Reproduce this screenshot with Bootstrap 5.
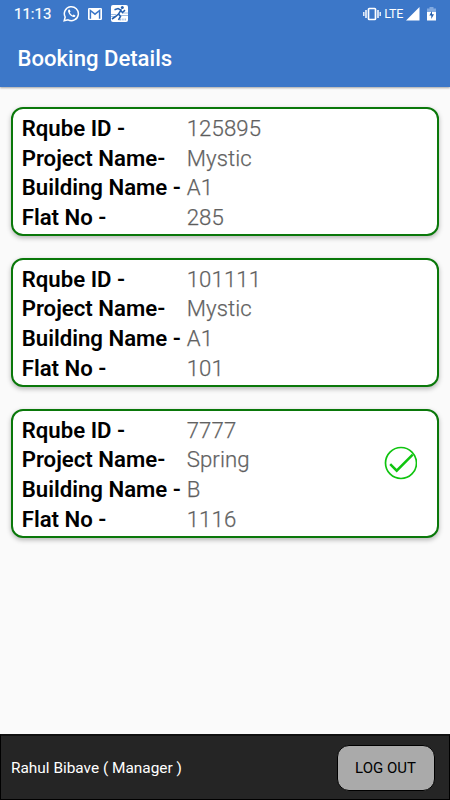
<!DOCTYPE html>
<html lang="en">
<head>
<meta charset="utf-8">
<meta name="viewport" content="width=device-width, initial-scale=1">
<title>Booking Details</title>
<link rel="stylesheet" href="https://cdn.jsdelivr.net/npm/bootstrap@5.3.0/dist/css/bootstrap.min.css">
<style>
body { font-family: Roboto, sans-serif; background: #fafafa; overflow: hidden; }
.topbar { background: #3c77c8; height: 87px; box-shadow: 0 1px 2px rgba(0,0,0,.35); }
.statusbar { height: 27px; padding: 0 14px; font-size: 15px; line-height: 27px; }
.clock { width: 49px; padding-top: 1px; font-weight: 400; -webkit-text-stroke: .2px #fff; }
.lte { font-size: 12.5px; letter-spacing: -.3px; margin-left: 3px; }
.app-title { height: 60px; padding-left: 17.5px; font-size: 22.1px; font-weight: 500; line-height: 62px; }
.bookings { padding: 20px 11px 0; gap: 21.5px; }
.booking { height: 129.4px; border: 2px solid #0a780a; border-radius: 12px; padding: 4px 20px 0 8.7px; box-shadow: 0 2px 5px rgba(0,0,0,.28); }
.field { height: 29.6px; font-size: 22.2px; line-height: 30px; white-space: nowrap; }
.field dt { width: 165px; font-weight: 600; color: #000; }
.field dd { font-weight: 300; letter-spacing: .1px; color: #5c5c5c; -webkit-text-stroke: .25px #707070; }
.account { height: 66px; background: #252525; border: 1px solid #000; border-top: 2px solid #111; padding: 0 14.5px 0 10px; font-size: 15.4px; }
.account-name { padding-top: 2px; }
.btn-logout { width: 98px; height: 46px; background: #aaa; border: 1px solid #000; border-radius: 12px; font-size: 15px; line-height: 44px; padding: 0; color: #000; }
</style>
</head>
<body class="vh-100 d-flex flex-column">
<header class="topbar text-white flex-shrink-0">
  <div class="statusbar d-flex align-items-center">
    <span class="clock">11:13</span>
    <svg width="17" height="17" viewBox="0 0 17 17" fill="none" stroke="#fff"><path d="M1.2 15.8 2.2 12A7 7 0 1 1 5 14.8z" stroke-width="1.5"/><path d="M5.8 4.6c-1 .7-1 2 0 3.6 1.200 2 2.700 3.400 4.600 3.800 1 .2 2-.6 2-1.600l-1.900-1-1 1C8.300 9.800 7.300 8.800 6.700 7.600l.8-.9-.7-2z" fill="#fff" stroke="none"/></svg>
    <svg class="ms-2" width="14" height="12" viewBox="0 0 14 12"><rect width="14" height="12" rx="1.300" fill="#fff"/><path d="M2.400 10.800V2.500L7 6.200l4.600-3.700v8.300" fill="none" stroke="#3c77c8" stroke-width="1.500"/></svg>
    <svg style="margin-left:9px" width="17" height="17" viewBox="0 0 17 17"><rect width="17" height="17" rx="2" fill="#fff"/><path d="M0 9.500h5M11 8h6M0 11.500h4M10 10.500h7" stroke="#9dbbe2"/><circle cx="11.300" cy="2.600" r="1.500" fill="#245fae"/><path d="M3.500 4.800 7 3.600l3 1.500-2.500 4 2 2.200L7.500 15M7.500 9 4.500 11.500 1 14M9.500 5.500l2 2L14 5.200" fill="none" stroke="#245fae" stroke-width="1.600"/><path d="M9 14.500h6" stroke="#9dbbe2" stroke-width="2" stroke-dasharray="1 .7"/></svg>
    <svg class="ms-auto" width="18" height="14" viewBox="0 0 18 14" fill="none" stroke="#fff"><rect x="5.500" y="1.500" width="7" height="11" rx=".8" stroke-width="1.700"/><path d="M3 3v8M15 3v8" stroke-width="1.500"/><path d="M.8 5v4M17.200 5v4" stroke-width="1.300"/></svg>
    <span class="lte">LTE</span>
    <svg style="margin-left:3px" width="14" height="14" viewBox="0 0 14 14"><path d="M0 13.500 13.500 0v13.500z" fill="#fff"/></svg>
    <svg style="margin-left:7px" width="9" height="14" viewBox="0 0 9 14"><path d="M0 1.500h2.500V0h4v1.500H9V5H0z" fill="#82aae0"/><path d="M0 5h9v8.500H0z" fill="#fff"/><path d="M5 4 2.300 8.500h2V12l2.700-4.700H5z" fill="#245fae"/></svg>
  </div>
  <h1 class="app-title m-0">Booking Details</h1>
</header>
<main class="bookings d-flex flex-column flex-grow-1">
  <section class="booking bg-white">
    <dl class="m-0">
      <div class="field d-flex"><dt>Rqube ID -</dt><dd class="m-0">125895</dd></div>
      <div class="field d-flex"><dt>Project Name-</dt><dd class="m-0">Mystic</dd></div>
      <div class="field d-flex"><dt>Building Name -</dt><dd class="m-0">A1</dd></div>
      <div class="field d-flex"><dt>Flat No -</dt><dd class="m-0">285</dd></div>
    </dl>
  </section>
  <section class="booking bg-white">
    <dl class="m-0">
      <div class="field d-flex"><dt>Rqube ID -</dt><dd class="m-0">101111</dd></div>
      <div class="field d-flex"><dt>Project Name-</dt><dd class="m-0">Mystic</dd></div>
      <div class="field d-flex"><dt>Building Name -</dt><dd class="m-0">A1</dd></div>
      <div class="field d-flex"><dt>Flat No -</dt><dd class="m-0">101</dd></div>
    </dl>
  </section>
  <section class="booking bg-white d-flex justify-content-between">
    <dl class="m-0">
      <div class="field d-flex"><dt>Rqube ID -</dt><dd class="m-0">7777</dd></div>
      <div class="field d-flex"><dt>Project Name-</dt><dd class="m-0">Spring</dd></div>
      <div class="field d-flex"><dt>Building Name -</dt><dd class="m-0">B</dd></div>
      <div class="field d-flex"><dt>Flat No -</dt><dd class="m-0">1116</dd></div>
    </dl>
    <svg style="margin-top:31.500px" width="33" height="34" viewBox="0 0 33 34" fill="none" stroke="#0fc40f"><circle cx="17" cy="17" r="15.500" stroke-width="1.700"/><path d="M6.200 18.200 12.700 24.700 28.700 8.700" stroke-width="2.500"/></svg>
  </section>
</main>
<footer class="account d-flex align-items-center justify-content-between text-white flex-shrink-0">
  <span class="account-name">Rahul Bibave ( Manager )</span>
  <button type="button" class="btn btn-logout">LOG OUT</button>
</footer>
<script src="https://cdn.jsdelivr.net/npm/bootstrap@5.3.0/dist/js/bootstrap.bundle.min.js"></script>
</body>
</html>
